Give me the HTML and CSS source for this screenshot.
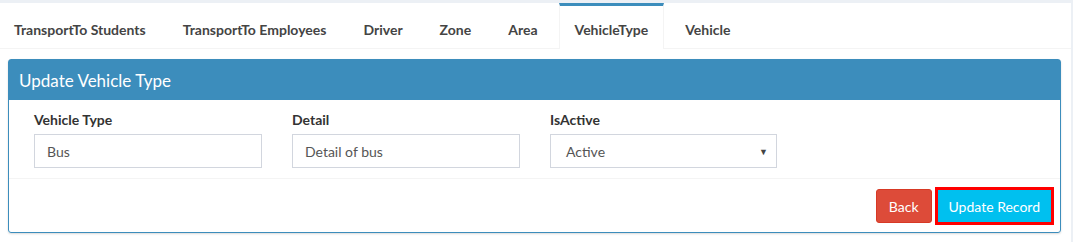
FILE: index.html
```html
<!DOCTYPE html>
<html lang="en">
<head>
  <meta charset="UTF-8">
  <title>Update Vehicle Type</title>
  <link rel="stylesheet" href="styles.css">
</head>
<body>
  <div class="tabs-card">
    <ul class="nav-tabs">
      <li class="tab"><a href="#">TransportTo Students</a></li>
      <li class="tab"><a href="#">TransportTo Employees</a></li>
      <li class="tab"><a href="#">Driver</a></li>
      <li class="tab"><a href="#">Zone</a></li>
      <li class="tab"><a href="#">Area</a></li>
      <li class="tab active"><a href="#">VehicleType</a></li>
      <li class="tab"><a href="#">Vehicle</a></li>
    </ul>

    <div class="tab-content">
      <div class="box">
        <div class="box-header">
          <h3 class="box-title">Update Vehicle Type</h3>
        </div>

        <div class="box-body">
          <div class="form-group">
            <label>Vehicle Type</label>
            <input type="text" class="form-control" value="Bus">
          </div>
          <div class="form-group">
            <label>Detail</label>
            <input type="text" class="form-control" value="Detail of bus">
          </div>
          <div class="form-group">
            <label>IsActive</label>
            <div class="form-control select">
              <span>Active</span>
              <span class="caret">▼</span>
            </div>
          </div>
        </div>

        <div class="box-footer">
          <button class="btn btn-danger">Back</button>
          <button class="btn btn-info btn-highlight">Update Record</button>
        </div>
      </div>
    </div>
  </div>
</body>
</html>
```

FILE: styles.css
```css
:root {
  --primary: #3c8dbc;
  --danger: #dd4b39;
  --info: #00c0ef;
  --bg-page: #ecf0f5;
  --border-light: #f4f4f4;
  --input-border: #d2d6de;
  --text-dark: #333333;
  --text-tab: #444444;
  --text-input: #555555;
}

* {
  margin: 0;
  padding: 0;
  box-sizing: border-box;
  font-family: "Lato", "Open Sans", sans-serif;
}

body {
  background: var(--bg-page);
  color: var(--text-dark);
  font-size: 14px;
}

.tabs-card {
  margin: 3px 2px 0 0;
  background: #fff;
  min-height: 239px;
}

.nav-tabs {
  list-style: none;
  display: flex;
  margin-left: -2px;
  border-bottom: 1px solid var(--border-light);
}

.tab {
  border-top: 3px solid transparent;
  border-left: 1px solid transparent;
  border-right: 1px solid transparent;
  margin-right: 5px;
  margin-bottom: -1px;
}

.tab a {
  display: block;
  padding: 14px 15px 9px;
  line-height: 20px;
  font-weight: 700;
  color: var(--text-tab);
  text-decoration: none;
}

.tab.active {
  border-top-color: var(--primary);
  border-left-color: var(--border-light);
  border-right-color: var(--border-light);
  background: #fff;
}

.tab-content {
  padding: 10px 10px 8px 8px;
}

.box {
  border: 1px solid var(--primary);
  border-radius: 3px;
  box-shadow: 0 1px 2px rgba(0, 0, 0, 0.15);
}

.box-header {
  background: var(--primary);
  height: 40px;
  padding: 0 10px;
  display: flex;
  align-items: center;
}

.box-title {
  color: #fff;
  font-size: 17px;
  font-weight: 400;
}

.box-body {
  display: grid;
  grid-template-columns: 228px 228px 227px;
  column-gap: 30px;
  padding: 10px 25px 10px;
  border-bottom: 1px solid var(--border-light);
}

.form-group label {
  display: block;
  font-weight: 700;
  line-height: 20px;
  margin-bottom: 4px;
}

.form-control {
  width: 100%;
  height: 34px;
  padding: 6px 12px;
  border: 1px solid var(--input-border);
  font-size: 14px;
  color: var(--text-input);
  background: #fff;
}

.select {
  display: flex;
  align-items: center;
  justify-content: space-between;
  padding: 6px 8px 6px 15px;
}

.caret {
  font-size: 9px;
  color: #444;
}

.box-footer {
  display: flex;
  justify-content: flex-end;
  align-items: center;
  gap: 3px;
  padding: 8px 6px 7px 10px;
}

.btn {
  height: 34px;
  padding: 0 12px;
  border: 1px solid transparent;
  border-radius: 3px;
  font-size: 14px;
  color: #fff;
  cursor: pointer;
}

.btn-danger {
  background: var(--danger);
  border-color: #d73925;
}

.btn-info {
  background: var(--info);
}

.btn-highlight {
  height: 38px;
  border: 3px solid #ff0000;
  border-radius: 0;
  padding: 0 11px;
}
```
